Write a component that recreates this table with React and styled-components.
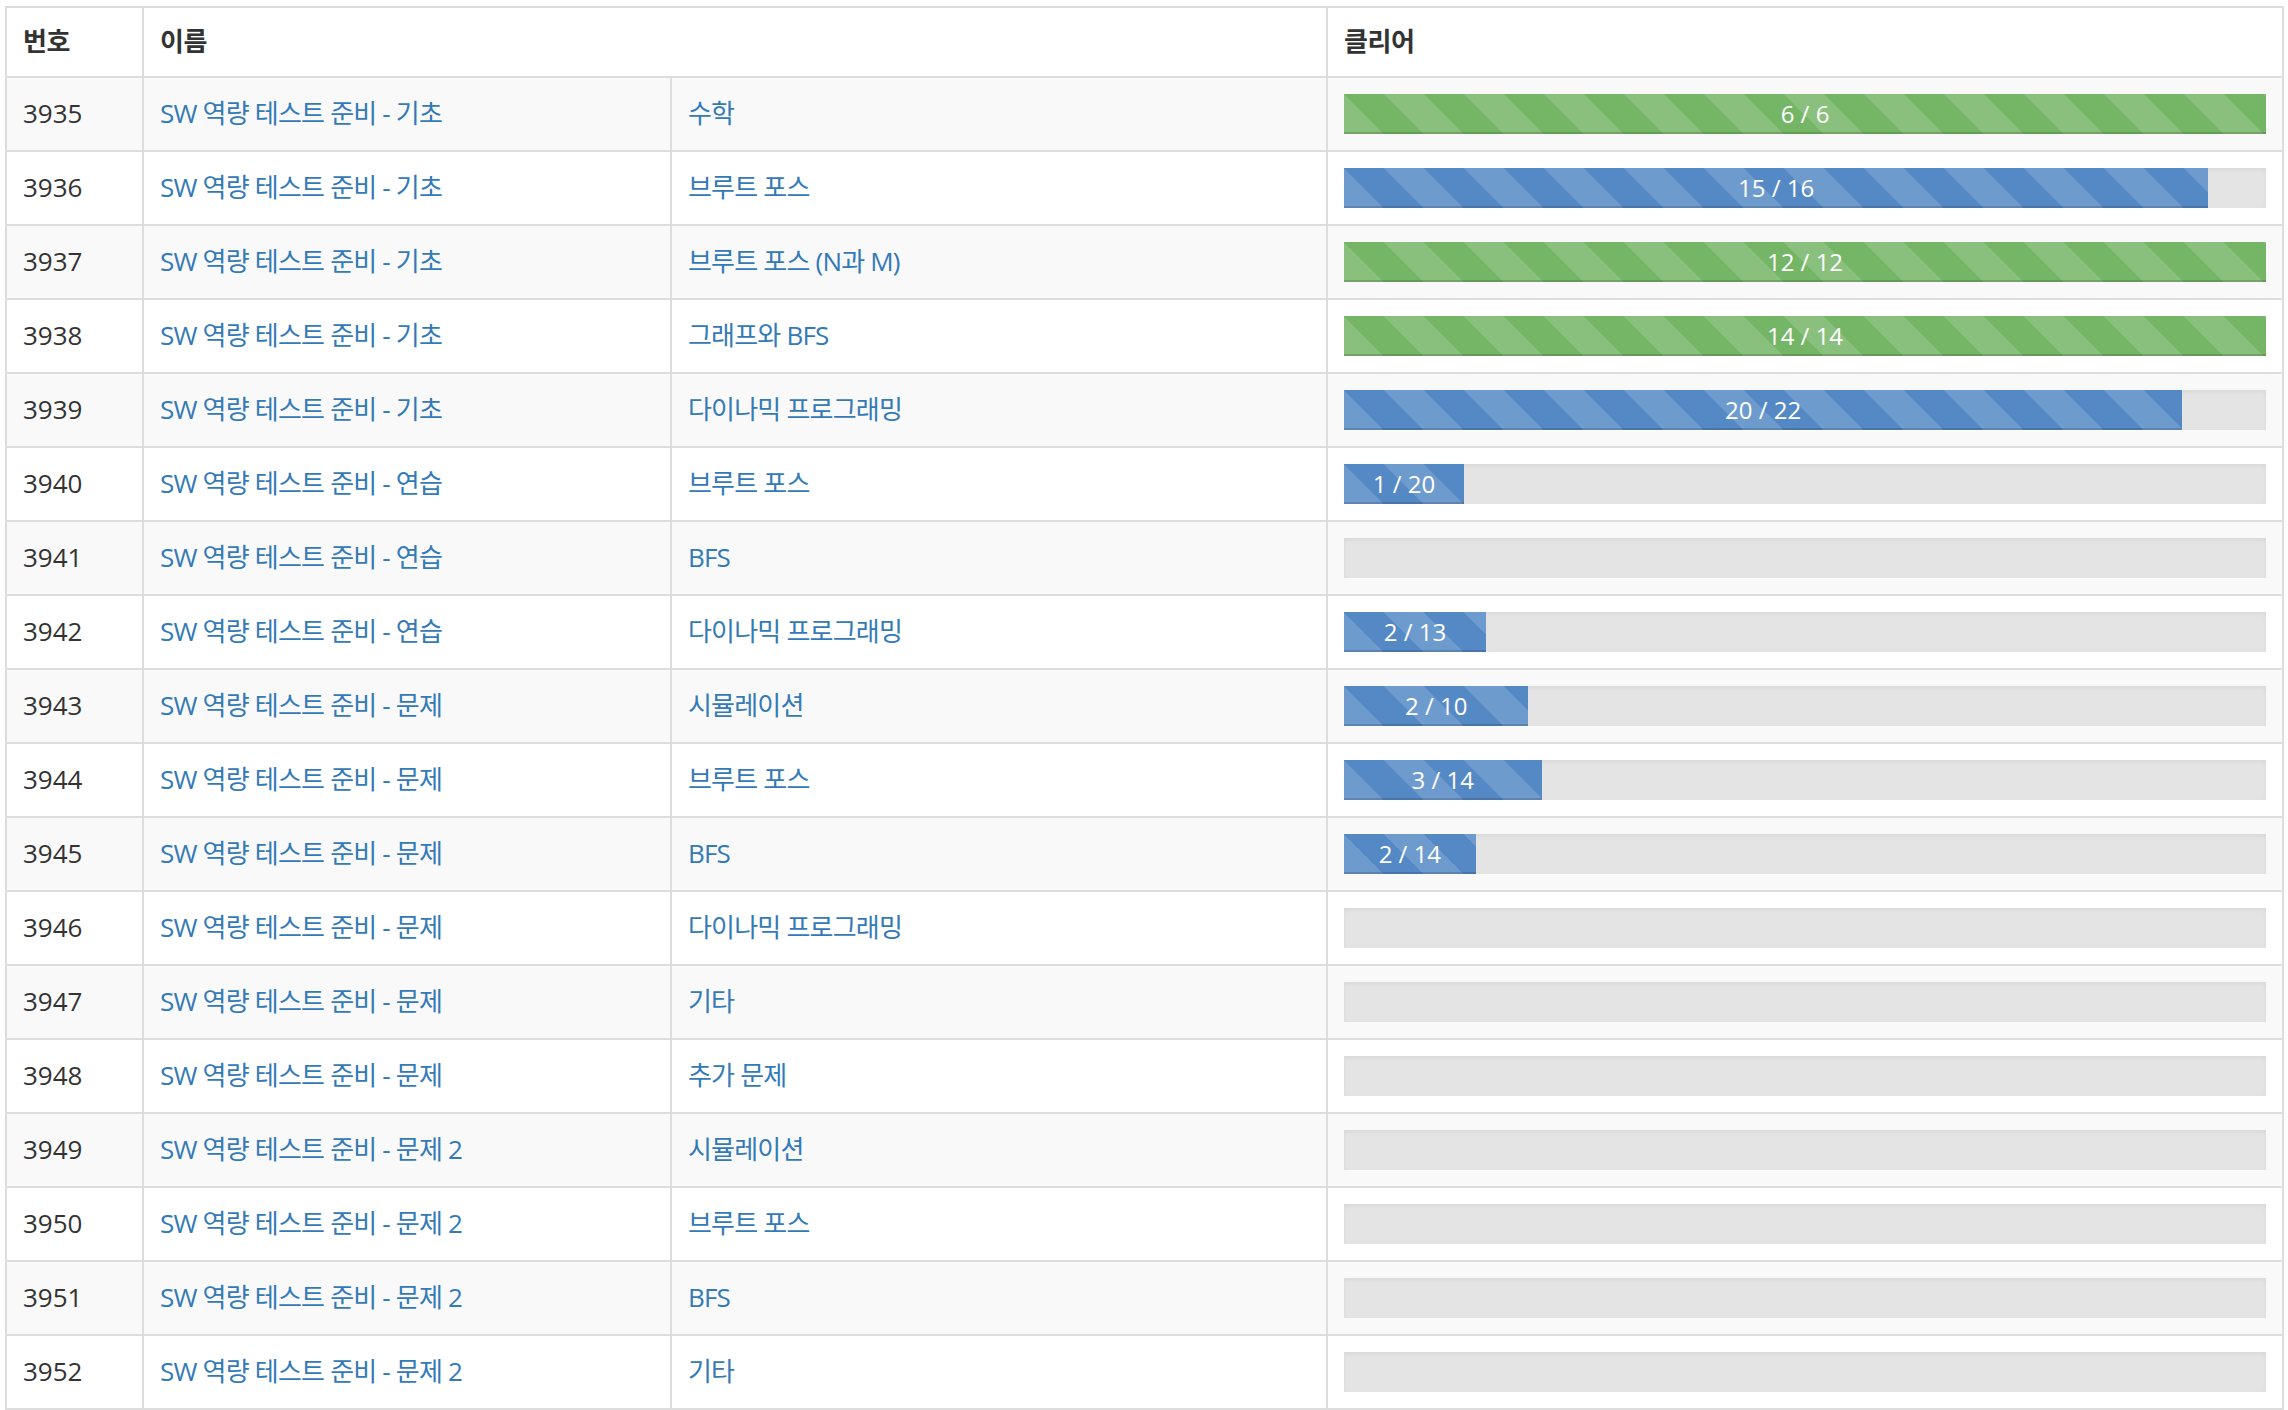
import styled, { createGlobalStyle } from "styled-components"

const GlobalStyle = createGlobalStyle`
body {
    margin: 0;
    background: #fff;
    font-family: "Open Sans", "Noto Sans CJK KR", sans-serif;
    font-size: 26px;
    color: #333;
}
`

const rows = [
    [3935, "기초", "수학", 6, 6],
    [3936, "기초", "브루트 포스", 15, 16],
    [3937, "기초", "브루트 포스 (N과 M)", 12, 12],
    [3938, "기초", "그래프와 BFS", 14, 14],
    [3939, "기초", "다이나믹 프로그래밍", 20, 22],
    [3940, "연습", "브루트 포스", 1, 20],
    [3941, "연습", "BFS", 0, 0],
    [3942, "연습", "다이나믹 프로그래밍", 2, 13],
    [3943, "문제", "시뮬레이션", 2, 10],
    [3944, "문제", "브루트 포스", 3, 14],
    [3945, "문제", "BFS", 2, 14],
    [3946, "문제", "다이나믹 프로그래밍", 0, 0],
    [3947, "문제", "기타", 0, 0],
    [3948, "문제", "추가 문제", 0, 0],
    [3949, "문제 2", "시뮬레이션", 0, 0],
    [3950, "문제 2", "브루트 포스", 0, 0],
    [3951, "문제 2", "BFS", 0, 0],
    [3952, "문제 2", "기타", 0, 0],
]

function Progress({ solved, total }) {
    if (!solved) return <Track />
    const done = solved === total
    return (
        <Track>
            <Bar $done={done} style={{ width: `${(solved / total) * 100}%` }}>
                {solved} / {total}
            </Bar>
        </Track>
    )
}

export default function App() {
    return (
        <Page>
            <GlobalStyle />
            <Table>
                <colgroup>
                    <col style={{ width: 137 }} />
                    <col style={{ width: 528 }} />
                    <col style={{ width: 656 }} />
                    <col />
                </colgroup>
                <thead>
                    <tr>
                        <Th>번호</Th>
                        <Th colSpan={2}>이름</Th>
                        <Th>클리어</Th>
                    </tr>
                </thead>
                <tbody>
                    {rows.map(([id, part, topic, solved, total]) => (
                        <Row key={id}>
                            <Td>{id}</Td>
                            <Td><Link href="#">SW 역량 테스트 준비 - {part}</Link></Td>
                            <Td><Link href="#">{topic}</Link></Td>
                            <Td><Progress solved={solved} total={total} /></Td>
                        </Row>
                    ))}
                </tbody>
            </Table>
        </Page>
    )
}

const Page = styled.div`
padding: 6px 4px 0 5px;
`

const Table = styled.table`
width: 100%;
table-layout: fixed;
border-collapse: separate;
border-spacing: 0;
border-top: 2px solid #ddd;
border-left: 2px solid #ddd;
`

const Th = styled.th`
padding: 15px 16px 17px;
line-height: 36px;
text-align: left;
font-weight: 700;
color: #333;
letter-spacing: -0.4px;
border-right: 2px solid #ddd;
border-bottom: 2px solid #ddd;
`

const Row = styled.tr`
&:nth-child(odd) {
    background-color: #f9f9f9;
}
`

const Td = styled.td`
padding: 15px 16px 17px;
line-height: 40px;
height: 40px;
vertical-align: middle;
border-right: 2px solid #ddd;
border-bottom: 2px solid #ddd;
white-space: nowrap;

&:last-child {
    padding: 16px;
}
`

const Link = styled.a`
color: #337ab7;
text-decoration: none;
letter-spacing: -0.8px;
`

const Track = styled.div`
display: flex;
height: 40px;
background-color: #e4e4e4;
box-shadow: inset 0 2px 4px rgba(0, 0, 0, 0.05);
overflow: hidden;
`

const Bar = styled.div`
min-width: 120px;
height: 40px;
line-height: 40px;
font-size: 24px;
color: #fff;
text-align: center;
background-color: ${p => p.$done ? "#74b566" : "#5589c6"};
background-image: linear-gradient(45deg, transparent 25%, rgba(255, 255, 255, 0.15) 25%, rgba(255, 255, 255, 0.15) 50%, transparent 50%, transparent 75%, rgba(255, 255, 255, 0.15) 75%);
background-size: 80px 80px;
box-shadow: inset 0 -2px 0 rgba(0, 0, 0, 0.15);
`
